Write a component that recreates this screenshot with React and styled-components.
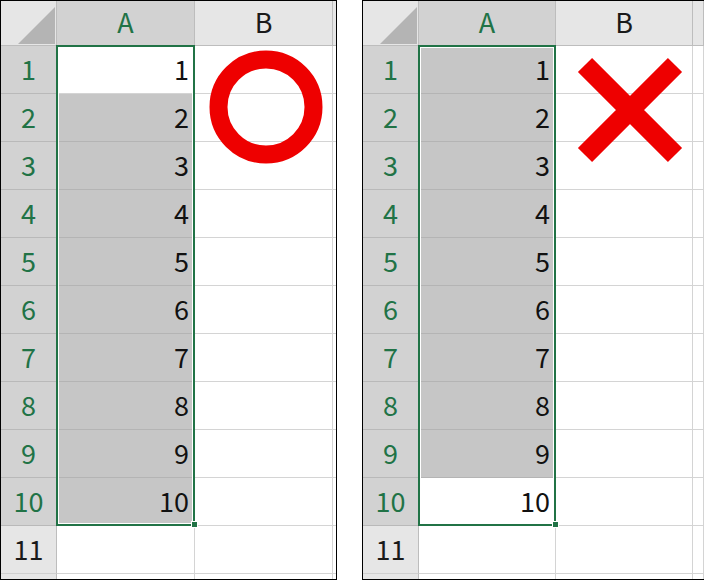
import React from "react";
import styled, { createGlobalStyle, css } from "styled-components";

const GlobalStyle = createGlobalStyle`
  html, body { margin: 0; padding: 0; background: #fff; }
  body { width: 704px; height: 581px; overflow: hidden; }
`;

const Page = styled.div`
  display: flex;
  gap: 25px;
  align-items: flex-start;
  width: 704px;
  height: 581px;
  overflow: hidden;
  font-family: "Noto Sans CJK JP", "Noto Sans", sans-serif;
`;

const Panel = styled.div`
  position: relative;
  flex: none;
  box-sizing: border-box;
  width: ${(p) => p.$width}px;
  height: 580px;
  border: 1px solid #000;
  overflow: hidden;
  background: #fff;
`;

const Grid = styled.div`
  display: grid;
  grid-template-columns: 56px ${(p) => p.$col}px ${(p) => p.$col}px 1fr;
  grid-template-rows: 45px;
  grid-auto-rows: 48px;
`;

const base = css`
  box-sizing: border-box;
  display: flex;
  align-items: center;
  font-size: 27px;
  line-height: 1;
  padding-bottom: 3px;
  border-right: 1px solid #d4d4d4;
  border-bottom: 1px solid #d4d4d4;
  overflow: hidden;
  white-space: nowrap;
`;

const Corner = styled.div`
  ${base};
  position: relative;
  background: #e6e6e6;
  border-color: #bdbdbd;
  &::after {
    content: "";
    position: absolute;
    left: 17px;
    top: 6px;
    width: 37px;
    height: 37px;
    background: #b4b4b4;
    clip-path: polygon(100% 0, 100% 100%, 0 100%);
  }
`;

const ColHeader = styled.div`
  ${base};
  justify-content: center;
  background: ${(p) => (p.$selected ? "#d2d2d2" : "#e6e6e6")};
  color: ${(p) => (p.$selected ? "#217346" : "#1a1a1a")};
  border-color: #bdbdbd;
`;

const RowHeader = styled.div`
  ${base};
  justify-content: center;
  background: ${(p) => (p.$selected ? "#d2d2d2" : "#e6e6e6")};
  color: ${(p) => (p.$selected ? "#217346" : "#1a1a1a")};
  border-right-color: #bdbdbd;
  border-bottom-color: ${(p) => (p.$selected ? "#b9b9b9" : "#d0d0d0")};
`;

const Cell = styled.div`
  ${base};
  justify-content: flex-end;
  padding-right: 5px;
  color: #111;
  background: ${(p) => (p.$fill ? "#c6c6c6" : "#fff")};
  border-bottom-color: ${(p) => (p.$fill ? "#b4b4b4" : "#d4d4d4")};
`;

const Selection = styled.div`
  position: absolute;
  left: 55px;
  top: 44px;
  width: ${(p) => p.$width}px;
  height: 481px;
  box-sizing: border-box;
  border: 2px solid #217346;
  box-shadow: inset 0 0 0 1px #fff;
  pointer-events: none;
`;

const Handle = styled.div`
  position: absolute;
  right: -5px;
  bottom: -4px;
  width: 5px;
  height: 5px;
  background: #217346;
  border: 1px solid #fff;
`;

const Mark = styled.svg`
  position: absolute;
  left: ${(p) => p.$left}px;
  top: ${(p) => p.$top}px;
  overflow: visible;
`;

const ROWS = Array.from({ length: 12 }, (_, i) => i + 1);

function Sheet({ width, col, activeRow, mark }) {
  return (
    <Panel $width={width}>
      <Grid $col={col}>
        <Corner />
        <ColHeader $selected>A</ColHeader>
        <ColHeader>B</ColHeader>
        <ColHeader />
        {ROWS.map((r) => {
          const inSel = r <= 10;
          return (
            <React.Fragment key={r}>
              <RowHeader $selected={inSel}>{r <= 11 ? r : ""}</RowHeader>
              <Cell $fill={inSel && r !== activeRow}>{inSel ? r : ""}</Cell>
              <Cell />
              <Cell />
            </React.Fragment>
          );
        })}
      </Grid>
      <Selection $width={col + 1}>
        <Handle />
      </Selection>
      {mark === "circle" ? (
        <Mark $left={208} $top={49} width="114" height="114" viewBox="0 0 114 114">
          <circle cx="57" cy="57" r="47.5" fill="none" stroke="#ee0000" strokeWidth="18" />
        </Mark>
      ) : (
        <Mark $left={210} $top={50} width="114" height="118" viewBox="0 0 114 118">
          <path
            d="M12 14 L102 104 M102 14 L12 104"
            fill="none"
            stroke="#ee0000"
            strokeWidth="20"
            strokeLinecap="butt"
          />
        </Mark>
      )}
    </Panel>
  );
}

export default function App() {
  return (
    <>
      <GlobalStyle />
      <Page>
        <Sheet width={337} col={138} activeRow={1} mark="circle" />
        <Sheet width={343} col={137} activeRow={10} mark="cross" />
      </Page>
    </>
  );
}
